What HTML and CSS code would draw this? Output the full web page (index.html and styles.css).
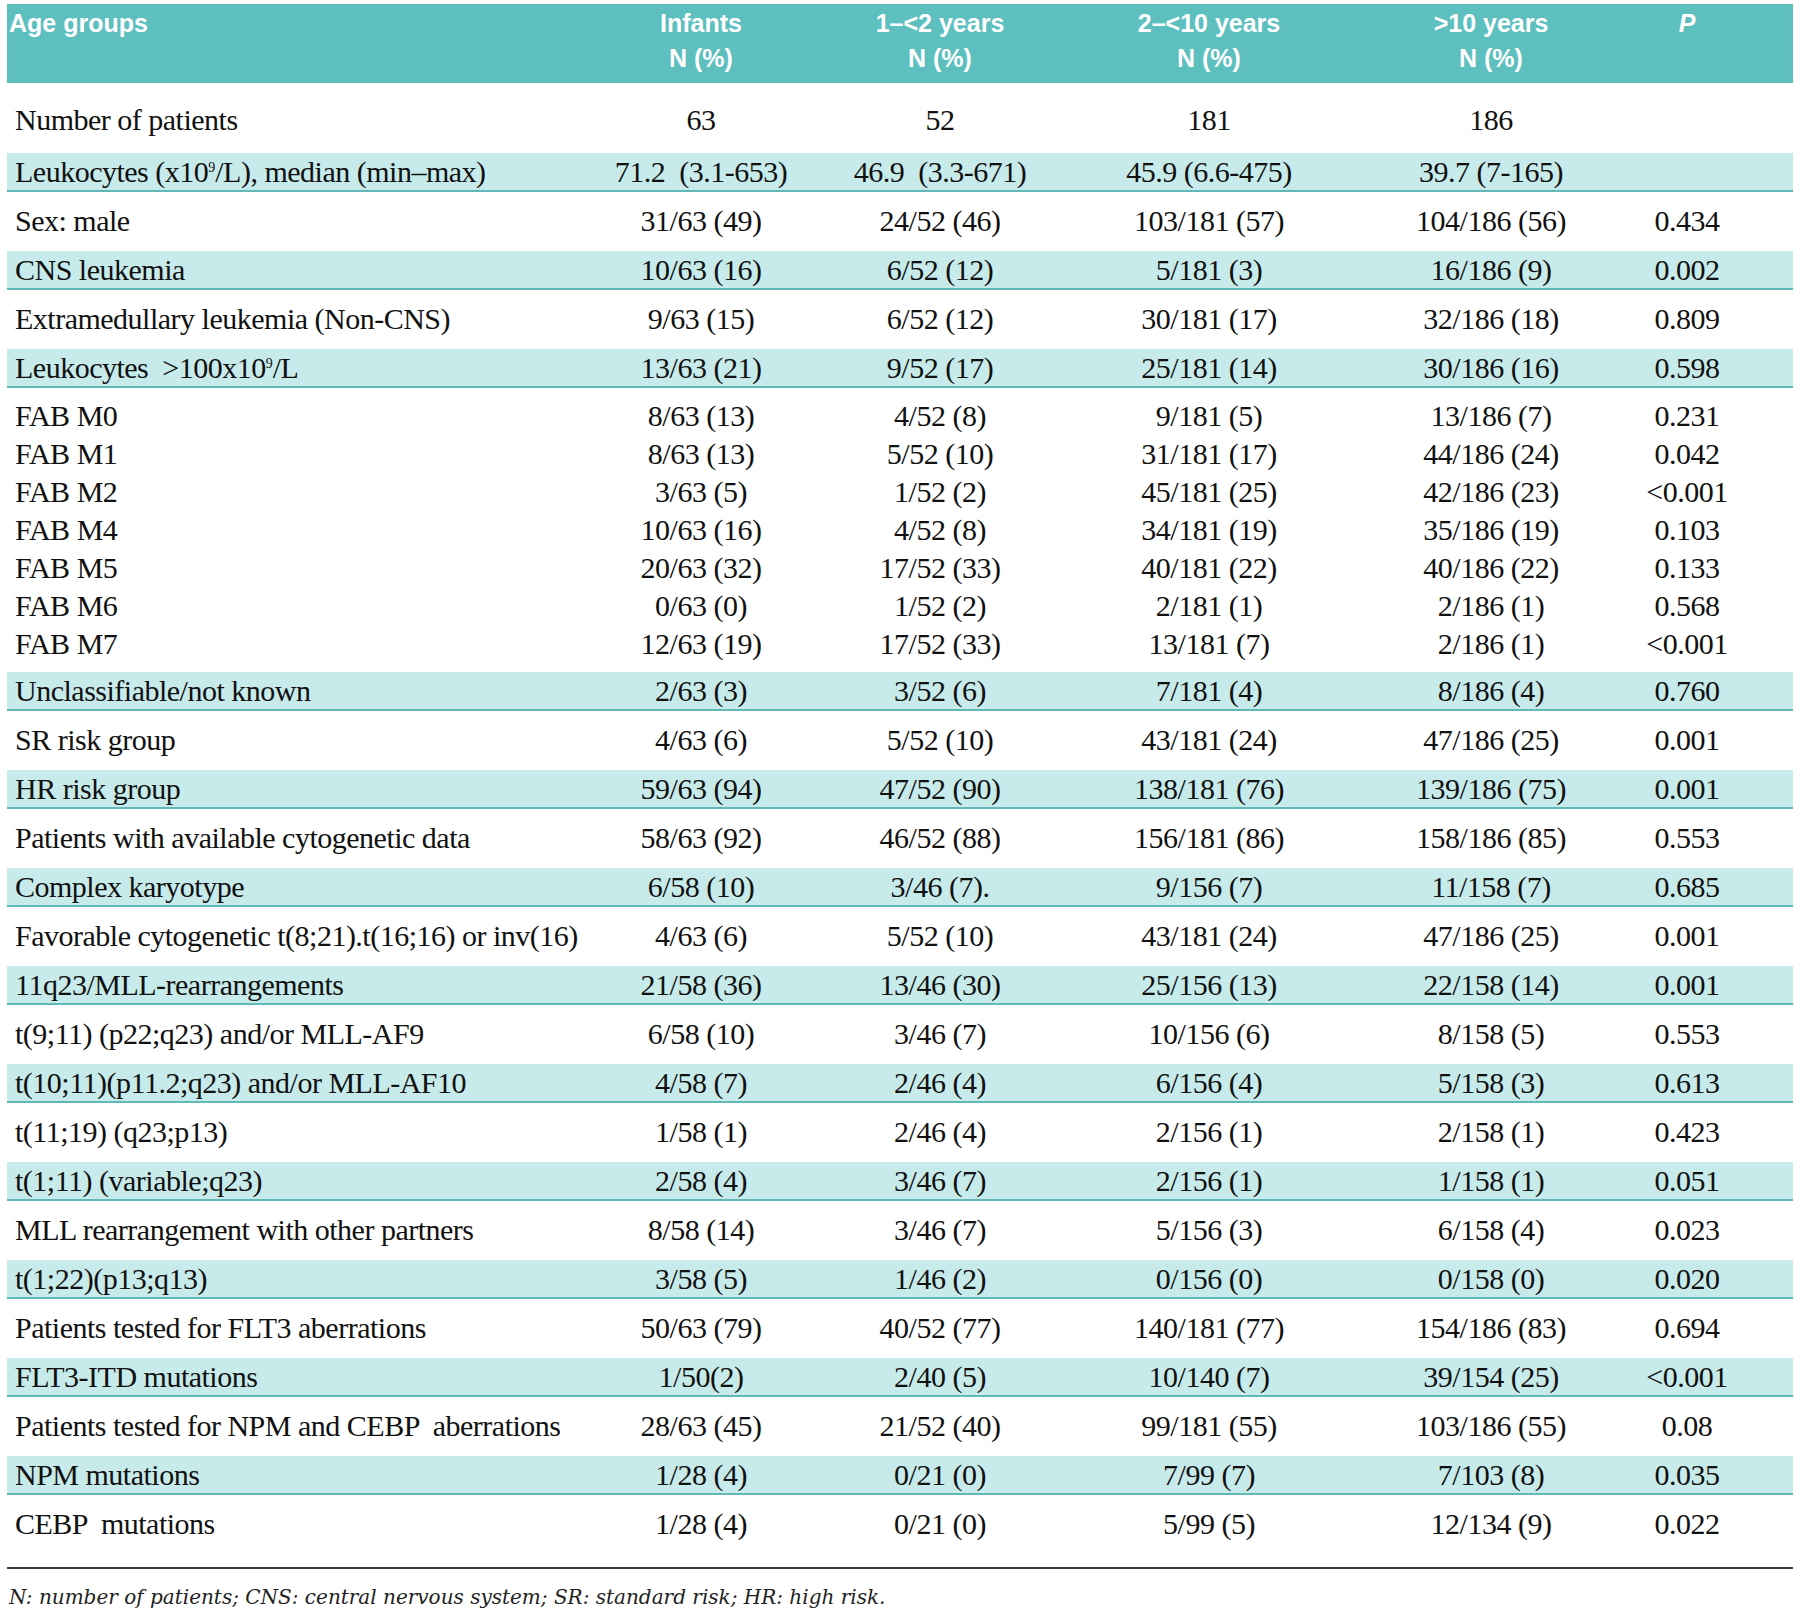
FILE: index.html
```html
<!DOCTYPE html>
<html lang="en">
<head>
<meta charset="utf-8">
<title>Age groups table</title>
<link rel="stylesheet" href="styles.css">
</head>
<body>
<div class="table">
  <div class="row head">
    <div class="hc lab">Age groups</div>
    <div class="hc">Infants<br>N (%)</div>
    <div class="hc">1–&lt;2 years<br>N (%)</div>
    <div class="hc">2–&lt;10 years<br>N (%)</div>
    <div class="hc">&gt;10 years<br>N (%)</div>
    <div class="hc pv">P</div>
  </div>

  <div class="row first"><div class="c lab">Number of patients</div><div class="c">63</div><div class="c">52</div><div class="c">181</div><div class="c">186</div><div class="c"></div></div>
  <div class="row shade"><div class="c lab">Leukocytes (x10<span class="sup">9</span>/L), median (min–max)</div><div class="c">71.2  (3.1-653)</div><div class="c">46.9  (3.3-671)</div><div class="c">45.9 (6.6-475)</div><div class="c">39.7 (7-165)</div><div class="c"></div></div>
  <div class="row"><div class="c lab">Sex: male</div><div class="c">31/63 (49)</div><div class="c">24/52 (46)</div><div class="c">103/181 (57)</div><div class="c">104/186 (56)</div><div class="c">0.434</div></div>
  <div class="row shade"><div class="c lab">CNS leukemia</div><div class="c">10/63 (16)</div><div class="c">6/52 (12)</div><div class="c">5/181 (3)</div><div class="c">16/186 (9)</div><div class="c">0.002</div></div>
  <div class="row"><div class="c lab">Extramedullary leukemia (Non-CNS)</div><div class="c">9/63 (15)</div><div class="c">6/52 (12)</div><div class="c">30/181 (17)</div><div class="c">32/186 (18)</div><div class="c">0.809</div></div>
  <div class="row shade"><div class="c lab">Leukocytes  &gt;100x10<span class="sup">9</span>/L</div><div class="c">13/63 (21)</div><div class="c">9/52 (17)</div><div class="c">25/181 (14)</div><div class="c">30/186 (16)</div><div class="c">0.598</div></div>

  <div class="fab">
    <div class="row tight"><div class="c lab">FAB M0</div><div class="c">8/63 (13)</div><div class="c">4/52 (8)</div><div class="c">9/181 (5)</div><div class="c">13/186 (7)</div><div class="c">0.231</div></div>
    <div class="row tight"><div class="c lab">FAB M1</div><div class="c">8/63 (13)</div><div class="c">5/52 (10)</div><div class="c">31/181 (17)</div><div class="c">44/186 (24)</div><div class="c">0.042</div></div>
    <div class="row tight"><div class="c lab">FAB M2</div><div class="c">3/63 (5)</div><div class="c">1/52 (2)</div><div class="c">45/181 (25)</div><div class="c">42/186 (23)</div><div class="c">&lt;0.001</div></div>
    <div class="row tight"><div class="c lab">FAB M4</div><div class="c">10/63 (16)</div><div class="c">4/52 (8)</div><div class="c">34/181 (19)</div><div class="c">35/186 (19)</div><div class="c">0.103</div></div>
    <div class="row tight"><div class="c lab">FAB M5</div><div class="c">20/63 (32)</div><div class="c">17/52 (33)</div><div class="c">40/181 (22)</div><div class="c">40/186 (22)</div><div class="c">0.133</div></div>
    <div class="row tight"><div class="c lab">FAB M6</div><div class="c">0/63 (0)</div><div class="c">1/52 (2)</div><div class="c">2/181 (1)</div><div class="c">2/186 (1)</div><div class="c">0.568</div></div>
    <div class="row tight"><div class="c lab">FAB M7</div><div class="c">12/63 (19)</div><div class="c">17/52 (33)</div><div class="c">13/181 (7)</div><div class="c">2/186 (1)</div><div class="c">&lt;0.001</div></div>
  </div>

  <div class="row shade"><div class="c lab">Unclassifiable/not known</div><div class="c">2/63 (3)</div><div class="c">3/52 (6)</div><div class="c">7/181 (4)</div><div class="c">8/186 (4)</div><div class="c">0.760</div></div>
  <div class="row"><div class="c lab">SR risk group</div><div class="c">4/63 (6)</div><div class="c">5/52 (10)</div><div class="c">43/181 (24)</div><div class="c">47/186 (25)</div><div class="c">0.001</div></div>
  <div class="row shade"><div class="c lab">HR risk group</div><div class="c">59/63 (94)</div><div class="c">47/52 (90)</div><div class="c">138/181 (76)</div><div class="c">139/186 (75)</div><div class="c">0.001</div></div>
  <div class="row"><div class="c lab">Patients with available cytogenetic data</div><div class="c">58/63 (92)</div><div class="c">46/52 (88)</div><div class="c">156/181 (86)</div><div class="c">158/186 (85)</div><div class="c">0.553</div></div>
  <div class="row shade"><div class="c lab">Complex karyotype</div><div class="c">6/58 (10)</div><div class="c">3/46 (7).</div><div class="c">9/156 (7)</div><div class="c">11/158 (7)</div><div class="c">0.685</div></div>
  <div class="row"><div class="c lab">Favorable cytogenetic t(8;21).t(16;16) or inv(16)</div><div class="c">4/63 (6)</div><div class="c">5/52 (10)</div><div class="c">43/181 (24)</div><div class="c">47/186 (25)</div><div class="c">0.001</div></div>
  <div class="row shade"><div class="c lab">11q23/MLL-rearrangements</div><div class="c">21/58 (36)</div><div class="c">13/46 (30)</div><div class="c">25/156 (13)</div><div class="c">22/158 (14)</div><div class="c">0.001</div></div>
  <div class="row"><div class="c lab">t(9;11) (p22;q23) and/or MLL-AF9</div><div class="c">6/58 (10)</div><div class="c">3/46 (7)</div><div class="c">10/156 (6)</div><div class="c">8/158 (5)</div><div class="c">0.553</div></div>
  <div class="row shade"><div class="c lab">t(10;11)(p11.2;q23) and/or MLL-AF10</div><div class="c">4/58 (7)</div><div class="c">2/46 (4)</div><div class="c">6/156 (4)</div><div class="c">5/158 (3)</div><div class="c">0.613</div></div>
  <div class="row"><div class="c lab">t(11;19) (q23;p13)</div><div class="c">1/58 (1)</div><div class="c">2/46 (4)</div><div class="c">2/156 (1)</div><div class="c">2/158 (1)</div><div class="c">0.423</div></div>
  <div class="row shade"><div class="c lab">t(1;11) (variable;q23)</div><div class="c">2/58 (4)</div><div class="c">3/46 (7)</div><div class="c">2/156 (1)</div><div class="c">1/158 (1)</div><div class="c">0.051</div></div>
  <div class="row"><div class="c lab">MLL rearrangement with other partners</div><div class="c">8/58 (14)</div><div class="c">3/46 (7)</div><div class="c">5/156 (3)</div><div class="c">6/158 (4)</div><div class="c">0.023</div></div>
  <div class="row shade"><div class="c lab">t(1;22)(p13;q13)</div><div class="c">3/58 (5)</div><div class="c">1/46 (2)</div><div class="c">0/156 (0)</div><div class="c">0/158 (0)</div><div class="c">0.020</div></div>
  <div class="row"><div class="c lab">Patients tested for FLT3 aberrations</div><div class="c">50/63 (79)</div><div class="c">40/52 (77)</div><div class="c">140/181 (77)</div><div class="c">154/186 (83)</div><div class="c">0.694</div></div>
  <div class="row shade"><div class="c lab">FLT3-ITD mutations</div><div class="c">1/50(2)</div><div class="c">2/40 (5)</div><div class="c">10/140 (7)</div><div class="c">39/154 (25)</div><div class="c">&lt;0.001</div></div>
  <div class="row"><div class="c lab">Patients tested for NPM and CEBP  aberrations</div><div class="c">28/63 (45)</div><div class="c">21/52 (40)</div><div class="c">99/181 (55)</div><div class="c">103/186 (55)</div><div class="c">0.08</div></div>
  <div class="row shade"><div class="c lab">NPM mutations</div><div class="c">1/28 (4)</div><div class="c">0/21 (0)</div><div class="c">7/99 (7)</div><div class="c">7/103 (8)</div><div class="c">0.035</div></div>
  <div class="row"><div class="c lab">CEBP  mutations</div><div class="c">1/28 (4)</div><div class="c">0/21 (0)</div><div class="c">5/99 (5)</div><div class="c">12/134 (9)</div><div class="c">0.022</div></div>

  <div class="rule"></div>
  <p class="note">N: number of patients; CNS: central nervous system; SR: standard risk; HR: high risk.</p>
</div>
</body>
</html>
```

FILE: styles.css
```css
html, body {
  margin: 0;
  padding: 0;
  background: #ffffff;
}

.table {
  margin: 4px 0 0 7px;
  width: 1786px;
  font-family: "Liberation Serif", "Times New Roman", serif;
  font-size: 30px;
  letter-spacing: -0.5px;
  color: #111111;
}

.row {
  display: grid;
  grid-template-columns: 575px 238px 240px 298px 266px 126px 1fr;
  align-items: center;
  height: 37px;
  margin-top: 10px;
  border-bottom: 2px solid transparent;
}

.c {
  text-align: center;
  white-space: pre;
  line-height: 37px;
}

.c.lab {
  text-align: left;
  padding-left: 8px;
}

.sup {
  font-size: 14px;
  line-height: 0;
  position: relative;
  top: -10px;
  letter-spacing: 0;
}

.head {
  margin-top: 0;
  height: 77px;
  padding-top: 2px;
  border-bottom: 0;
  align-items: start;
  background: #5ebfbf;
  font-family: "Liberation Sans", Arial, sans-serif;
  font-weight: bold;
  font-size: 25px;
  letter-spacing: 0;
  line-height: 35px;
  color: #ffffff;
}

.hc {
  text-align: center;
}

.hc.lab {
  text-align: left;
  padding-left: 2px;
}

.hc.pv {
  font-style: italic;
}

.first {
  margin-top: 14px;
  height: 44px;
}

.shade {
  background: #c7eaea;
  border-bottom-color: #62b8b8;
}

.fab {
  margin-top: 8px;
  margin-bottom: 3px;
}

.fab .row.tight {
  margin-top: 0;
  height: 38px;
  border-bottom: 0;
}

.rule {
  margin-top: 23px;
  height: 2px;
  background: #3a3a3a;
}

.note {
  margin: 13px 0 0 2px;
  font-family: "DejaVu Serif", "Liberation Serif", serif;
  font-style: italic;
  font-size: 20px;
  letter-spacing: 0;
  line-height: 30px;
  color: #222222;
}
```
